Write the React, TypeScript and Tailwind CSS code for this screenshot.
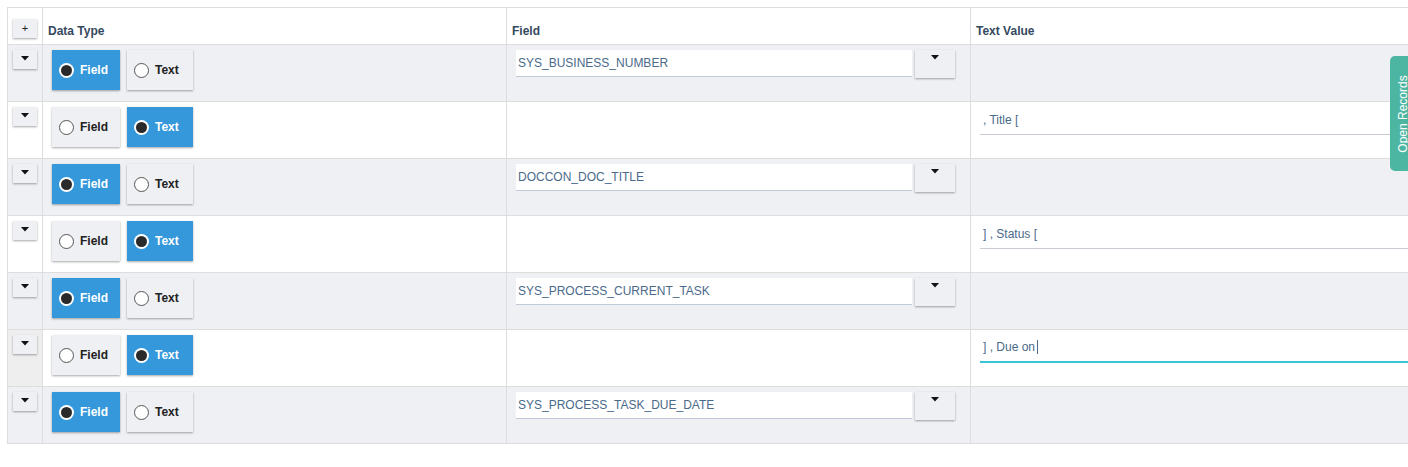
import React from "react";

type Row = { kind: "field" | "text"; value: string; focused?: boolean };

const rows: Row[] = [
  { kind: "field", value: "SYS_BUSINESS_NUMBER" },
  { kind: "text", value: ", Title [" },
  { kind: "field", value: "DOCCON_DOC_TITLE" },
  { kind: "text", value: "] , Status [" },
  { kind: "field", value: "SYS_PROCESS_CURRENT_TASK" },
  { kind: "text", value: "] , Due on", focused: true },
  { kind: "field", value: "SYS_PROCESS_TASK_DUE_DATE" },
];

const Caret = () => (
  <svg width="8" height="5" viewBox="0 0 8 5" className="block">
    <path d="M0 0h8L4 4.5z" fill="#111" />
  </svg>
);

const Radio = ({ on }: { on: boolean }) =>
  on ? (
    <span className="w-[15px] h-[15px] rounded-full bg-white flex items-center justify-center">
      <span className="w-[11px] h-[11px] rounded-full bg-[#2a2a2a]" />
    </span>
  ) : (
    <span className="w-[15px] h-[15px] rounded-full bg-white border border-[#555]" />
  );

const TypeButton = ({ label, on, w }: { label: string; on: boolean; w: string }) => (
  <div
    className={`${w} h-[40px] flex items-center pl-[7px] gap-[6px] text-[12px] font-bold shadow-[0_1px_2px_rgba(0,0,0,0.35)] ${
      on ? "bg-[#3498db] text-white" : "bg-[#eef0f3] text-[#222]"
    }`}
  >
    <Radio on={on} />
    <span>{label}</span>
  </div>
);

const App = () => {
  return (
    <div className="w-[1408px] h-[467px] overflow-hidden bg-white relative font-['Liberation_Sans',Arial,sans-serif]">
      <div className="pt-[7px] pl-[7px]">
        <table className="border-collapse w-[1460px] table-fixed">
          <colgroup>
            <col className="w-[35px]" />
            <col className="w-[464px]" />
            <col className="w-[464px]" />
            <col />
          </colgroup>
          <thead>
            <tr className="h-[37px]">
              <th className="border border-[#dddddd] align-top pt-[11px] pl-[5px]">
                <div className="w-[24px] h-[19px] bg-[#eef0f3] shadow-[0_1px_2px_rgba(0,0,0,0.35)] flex items-center justify-center text-[11px] text-[#222] font-normal">
                  +
                </div>
              </th>
              {["Data Type", "Field", "Text Value"].map((h) => (
                <th
                  key={h}
                  className="border border-[#dddddd] text-left align-middle pl-[5px] pt-[10px] text-[12px] font-bold text-[#34495e]"
                >
                  {h}
                </th>
              ))}
            </tr>
          </thead>
          <tbody>
            {rows.map((r, i) => {
              const bg = i % 2 === 0 ? "bg-[#eef0f4]" : "bg-white";
              return (
                <tr key={i} className={`h-[57px] ${bg}`}>
                  <td
                    className={`border border-[#dddddd] align-top pt-[5px] pl-[5px] ${
                      r.focused ? "bg-[#eeeeee]" : ""
                    }`}
                  >
                    <div className="w-[24px] h-[19px] bg-[#eef0f3] shadow-[0_1px_2px_rgba(0,0,0,0.35)] flex justify-center pt-[6px]">
                      <Caret />
                    </div>
                  </td>
                  <td className="border border-[#dddddd] align-top pt-[5px] pl-[9px]">
                    <div className="flex gap-[7px]">
                      <TypeButton label="Field" on={r.kind === "field"} w="w-[68px]" />
                      <TypeButton label="Text" on={r.kind === "text"} w="w-[66px]" />
                    </div>
                  </td>
                  <td className="border border-[#dddddd] align-top pt-[5px] pl-[9px]">
                    {r.kind === "field" && (
                      <div className="flex gap-[3px]">
                        <div className="w-[396px] h-[27px] bg-white border-b border-[#c0cad8] flex items-center pl-[2px] text-[12px] text-[#4a6a8a]">
                          {r.value}
                        </div>
                        <div className="w-[40px] h-[28px] bg-[#eef0f3] shadow-[0_1px_2px_rgba(0,0,0,0.35)] flex justify-center pt-[5px]">
                          <Caret />
                        </div>
                      </div>
                    )}
                  </td>
                  <td className="border border-[#dddddd] align-top pt-[10px] pl-[9px]">
                    {r.kind === "text" && (
                      <div
                        className={`h-[23px] flex items-center pb-[7px] pl-[3px] text-[12px] text-[#4a6a8a] ${
                          r.focused ? "border-b-2 border-[#3bc4d4]" : "border-b border-[#c8ccd2]"
                        }`}
                      >
                        {r.value}
                        {r.focused && <span className="ml-[2px] w-px h-[14px] bg-[#4a6a8a]" />}
                      </div>
                    )}
                  </td>
                </tr>
              );
            })}
          </tbody>
        </table>
      </div>
      <div className="absolute left-[1390px] top-[56px] w-[20px] h-[115px] bg-[#4db6a2] rounded-l-[5px] flex items-center justify-center overflow-hidden">
        <span className="-rotate-90 whitespace-nowrap text-white text-[12px] leading-none translate-x-[3px]">
          Open Records
        </span>
      </div>
    </div>
  );
};

export default App;
